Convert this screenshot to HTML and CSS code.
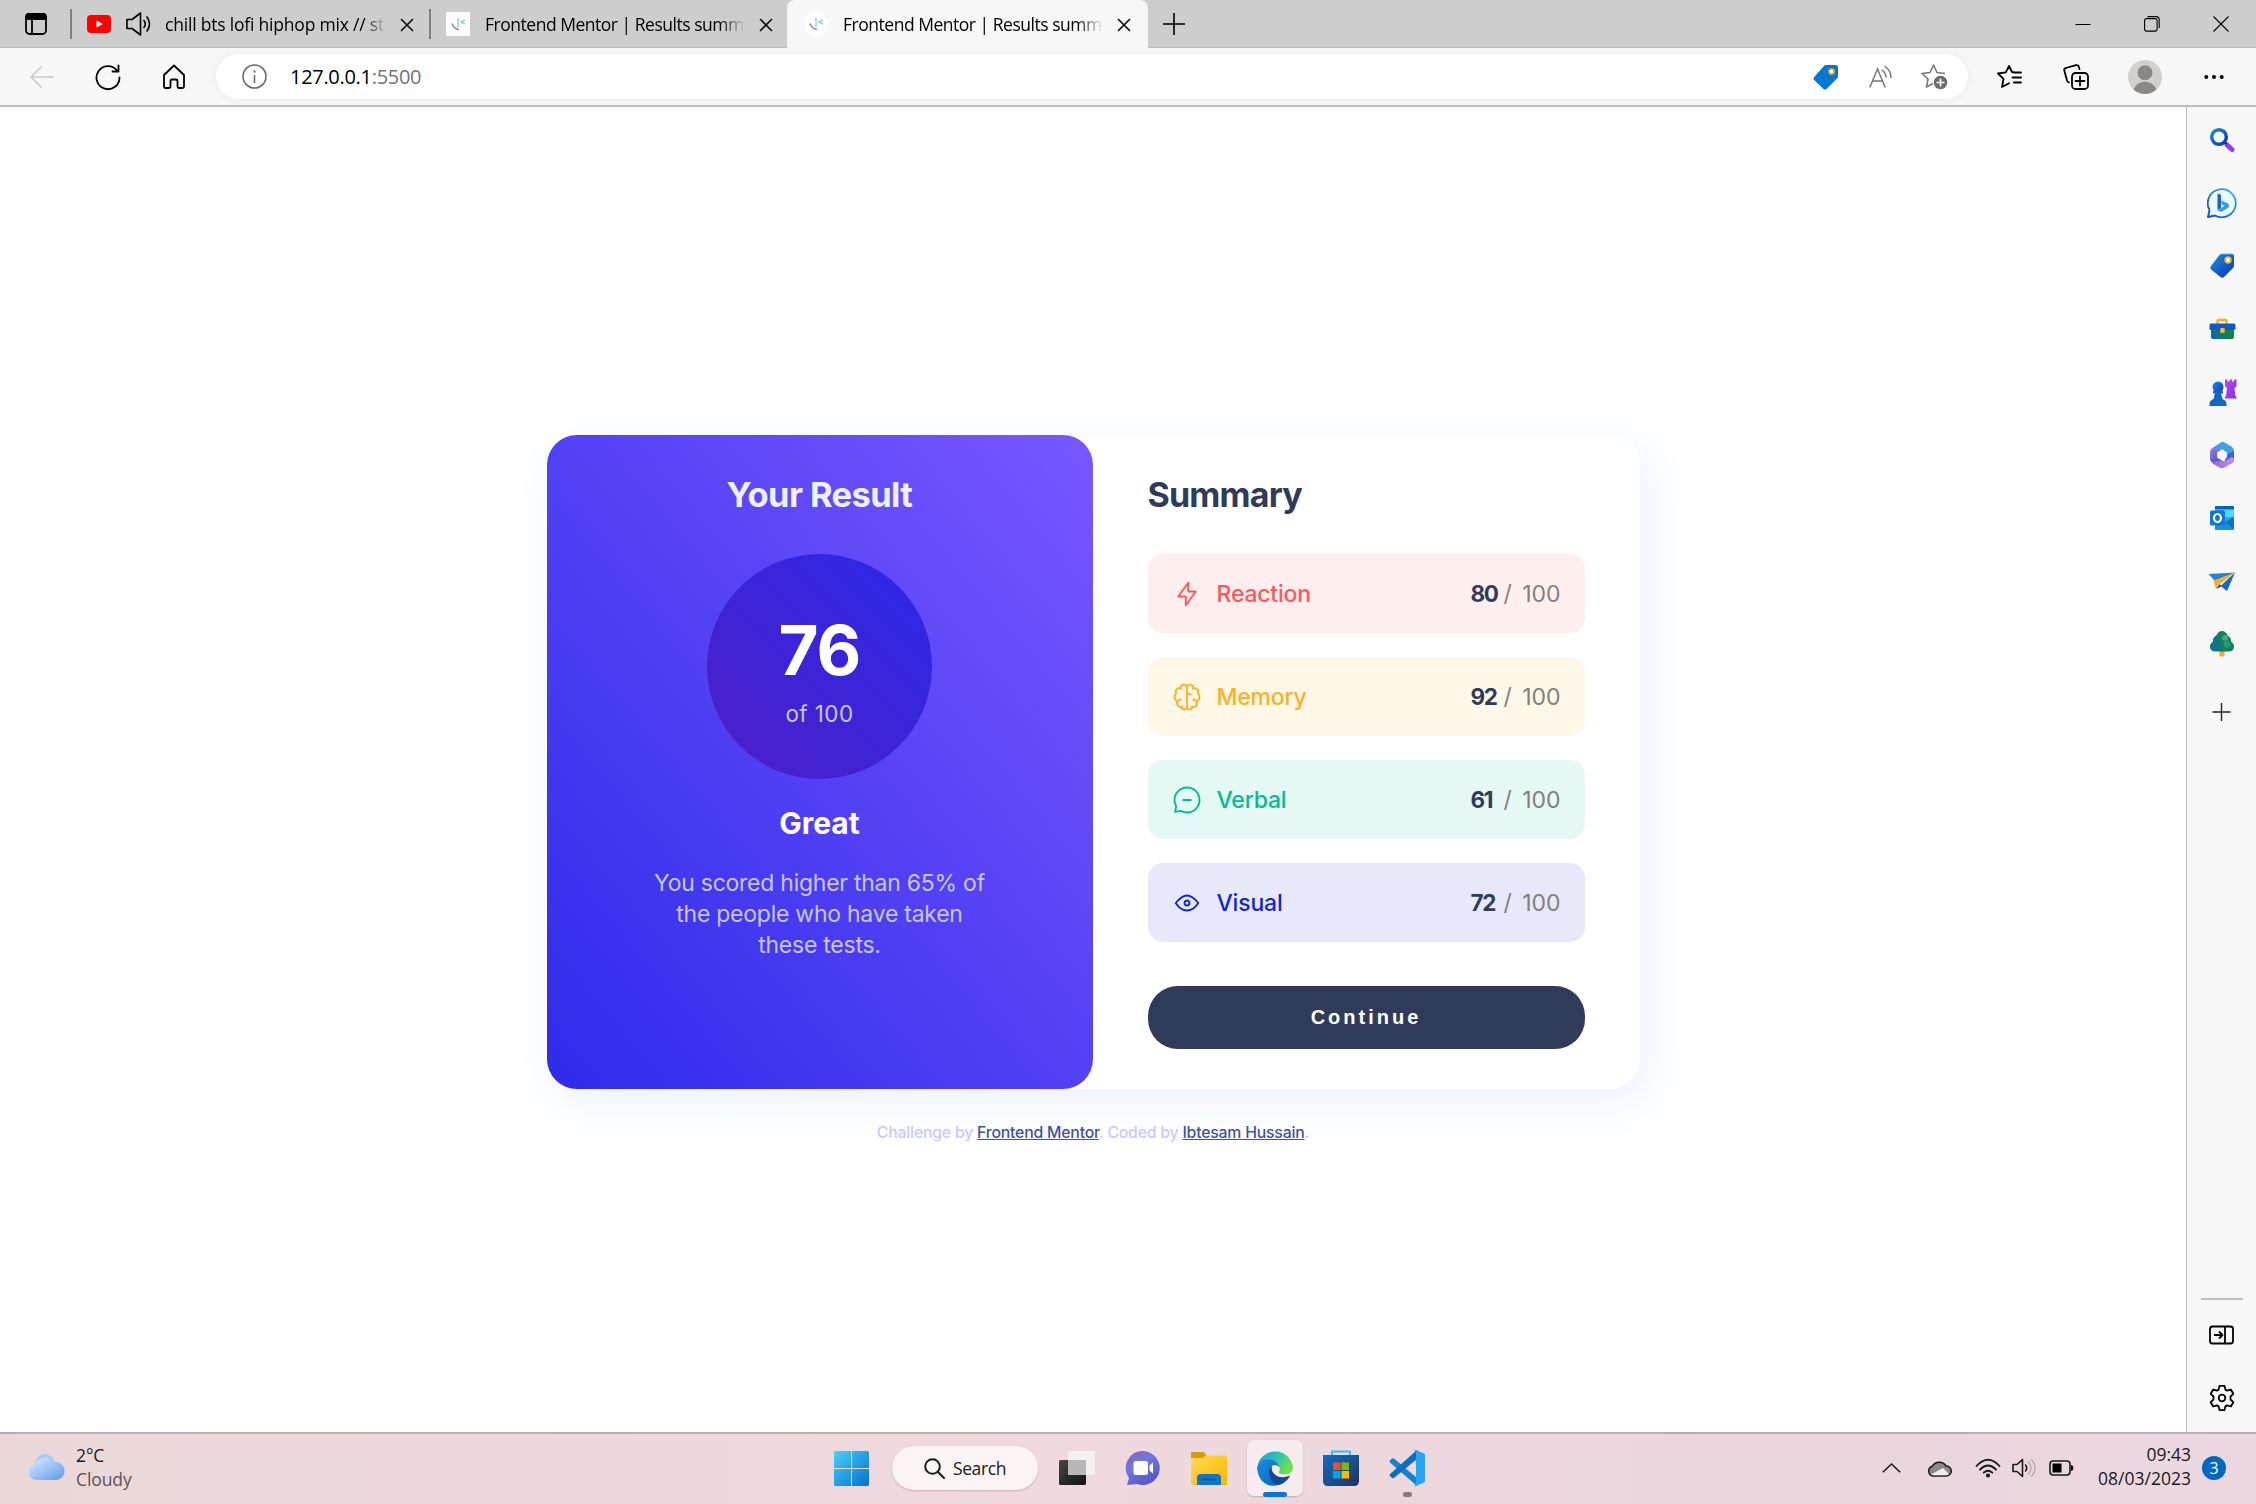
FILE: index.html
```html
<!DOCTYPE html>
<html lang="en">
<head>
<meta charset="utf-8">
<title>Frontend Mentor | Results summary component</title>
<link rel="stylesheet" href="styles.css">
</head>
<body>
<div class="tabstrip">
  <div class="tab-actions"><svg width="22" height="22" viewBox="0 0 22 22" fill="none" stroke="#000" stroke-width="1.8"><rect x="1" y="1" width="20" height="20" rx="3.5"/><path d="M1 6V4a3 3 0 0 1 3-3h14a3 3 0 0 1 3 3v2z" fill="#000"/><path d="M7 6v15"/></svg></div>
  <div class="tab tab-first">
    <svg width="24" height="18" viewBox="0 0 24 18"><rect width="24" height="18" rx="4" fill="#f00"/><path d="M9.5 5.5v7L16 9z" fill="#fff"/></svg>
    <svg class="speaker" width="25" height="24" viewBox="0 0 25 24" fill="none" stroke="#000" stroke-width="1.6" stroke-linejoin="round" stroke-linecap="round"><path d="M1 7.5h5L14.500 1v22L6 16.500H1zM18 8.500q2.400 3.500 0 7M21 5q5 7 0 14"/></svg>
    <span class="tab-title">chill bts lofi hiphop mix // st</span>
    <svg class="x" width="14" height="14" viewBox="0 0 14 14" stroke="#111" stroke-width="1.7"><path d="M1 1l12 12M13 1L1 13"/></svg>
  </div>
  <div class="tab tab-second">
    <svg class="fav" width="24" height="24" viewBox="0 0 24 24" fill="none" stroke-width="1.500"><path d="M0 0h24v24H0z" fill="#fff"/><path d="M12 6v9" stroke="#8fd0d6"/><path d="M19 8l-4 2 4 2" stroke="#8fd0d6"/><path d="M6 11.500q1.500 5 7 6" stroke="#8488c9"/></svg>
    <span class="tab-title">Frontend Mentor | Results summ</span>
    <svg class="x" width="14" height="14" viewBox="0 0 14 14" stroke="#111" stroke-width="1.7"><path d="M1 1l12 12M13 1L1 13"/></svg>
  </div>
  <div class="tab tab-active">
    <svg class="fav" width="24" height="24" viewBox="0 0 24 24" fill="none" stroke-width="1.500"><circle cx="12" cy="12" r="12" fill="#fff"/><path d="M12 6v9" stroke="#8fd0d6"/><path d="M19 8l-4 2 4 2" stroke="#8fd0d6"/><path d="M6 11.500q1.500 5 7 6" stroke="#8488c9"/></svg>
    <span class="tab-title">Frontend Mentor | Results summ</span>
    <svg class="x" width="14" height="14" viewBox="0 0 14 14" stroke="#111" stroke-width="1.7"><path d="M1 1l12 12M13 1L1 13"/></svg>
  </div>
  <svg class="new-tab" width="22" height="22" viewBox="0 0 22 22" stroke="#000" stroke-width="1.600"><path d="M11 0v22M0 11h22"/></svg>
  <div class="window-controls">
    <svg width="16" height="16" viewBox="0 0 16 16" stroke="#000"><path d="M.5 8.500h15"/></svg>
    <svg width="16" height="16" viewBox="0 0 16 16" fill="none" stroke="#000" stroke-width="1.100"><rect x=".6" y="2.600" width="12.500" height="12.500" rx="2"/><path d="M3.500.6H12a3.200 3.200 0 0 1 3.200 3.200V12"/></svg>
    <svg width="16" height="16" viewBox="0 0 16 16" stroke="#000" stroke-width="1.100"><path d="M.5.5l15 15M15.500.5l-15 15"/></svg>
  </div>
</div>

<div class="toolbar">
  <div class="nav">
    <svg width="24" height="24" viewBox="0 0 24 24" fill="none" stroke="#c9c9c9" stroke-width="1.500"><path d="M24 12H1M11.500 1.500L1 12l10.500 10.500"/></svg>
    <svg width="26" height="26" viewBox="0 0 26 26" fill="none" stroke="#000" stroke-width="1.800" stroke-linecap="round" stroke-linejoin="round"><path d="M24.500 13.500A11.500 11.500 0 1 1 22 6.500M23.500 1.500v6h-6"/></svg>
    <svg width="24" height="26" viewBox="0 0 24 26" fill="none" stroke="#000" stroke-width="1.800" stroke-linejoin="round"><path d="M2 11L12 1.500 22 11v11.500q0 1.500-1.500 1.500H17q-1.500 0-1.500-1.500V17q0-1.500-1.500-1.500h-4q-1.500 0-1.500 1.500v5.500Q8.500 24 7 24H3.500Q2 24 2 22.500z"/></svg>
  </div>
  <div class="address">
    <svg width="25" height="25" viewBox="0 0 25 25" fill="none" stroke="#6b6b6b" stroke-width="1.600"><circle cx="12.500" cy="12.500" r="11.500"/><path d="M12.500 11v8"/><path d="M12.500 6.500v2" stroke-width="2"/></svg>
    <span class="url">127.0.0.1<span class="port">:5500</span></span>
    <div class="address-icons">
      <svg width="26" height="26" viewBox="0 0 26 26"><path d="M13 1h9.500Q25 1 25 3.500V12q0 1.500-1 2.500L13.500 25q-1.500 1.200-3 0L1.200 16q-1.400-1.500 0-3L11 2q1-1 2-1z" fill="#0078d7"/><circle cx="18.500" cy="7.500" r="2.700" fill="#fff" stroke="#d9a513" stroke-width="1.600"/></svg>
      <svg width="24" height="24" viewBox="0 0 24 24" fill="none" stroke="#777" stroke-width="1.500" stroke-linecap="round"><path d="M1 22L8.500 4 16 22M3.500 16h10M13 5q4 3 4 7M16 1.500q6 4 6 11"/></svg>
      <svg width="27" height="27" viewBox="0 0 27 27" fill="none" stroke="#777" stroke-width="1.600" stroke-linejoin="round"><path d="M24 10.500l-8-1L12.500 2 9 9.500l-8 1 6 5.500-1.500 8L12 20.500"/><circle cx="19.500" cy="19.500" r="6.800" fill="#6b6b6b" stroke="none"/><path d="M19.500 15.500v8M15.500 19.500h8" stroke="#fff"/></svg>
    </div>
  </div>
  <div class="toolbar-icons">
    <svg width="25" height="25" viewBox="0 0 25 25" fill="none" stroke="#000" stroke-width="1.800" stroke-linejoin="round" stroke-linecap="round"><path d="M18 8.500l-3-.5L12 2 8.800 8.300 1 9.500l5.500 5.300L5 23l7-3.800M17 8.500h7M15.500 13.500H24M17 18.500h7"/></svg>
    <svg width="26" height="26" viewBox="0 0 26 26" fill="none" stroke="#000" stroke-width="1.800" stroke-linecap="round"><rect x="9" y="9" width="16" height="16" rx="3.500"/><path d="M17 12.500v9M12.500 17h9M6 18.500q-1.500-.5-2-2L1.300 6.500Q.8 4.500 3 4L13 1.200q2.500-.5 3 2l.5 2"/></svg>
    <svg width="34" height="34" viewBox="0 0 34 34"><circle cx="17" cy="17" r="17" fill="#d2d0ce"/><circle cx="17" cy="12.800" r="7.500" fill="#8a8886"/><path d="M5.500 29.500Q9 21.800 17 21.800t11.500 7.700A17 17 0 0 1 5.500 29.500z" fill="#8a8886"/></svg>
    <svg width="20" height="6" viewBox="0 0 20 6"><circle cx="2.300" cy="3" r="2"/><circle cx="10" cy="3" r="2"/><circle cx="17.700" cy="3" r="2"/></svg>
  </div>
</div>

<div class="workspace">
  <main class="page">
    <section class="card">
      <div class="result">
        <h1 class="result-title">Your Result</h1>
        <div class="score"><span class="score-value">76</span><span class="score-max">of 100</span></div>
        <h2 class="grade">Great</h2>
        <p class="comment">You scored higher than 65% of<br>the people who have taken<br>these tests.</p>
      </div>
      <div class="summary">
        <h1 class="summary-title">Summary</h1>
        <div class="stat reaction">
          <svg width="30" height="30" viewBox="0 0 20 20"><path d="M10.833 8.333V2.500l-6.666 9.167h5V17.500l6.666-9.167h-5Z"/></svg>
          <span class="label">Reaction</span><span class="points"><b>80</b><i>/</i><span>100</span></span>
        </div>
        <div class="stat memory">
          <svg width="30" height="30" viewBox="0 0 20 20"><path d="M5.833 11.667a2.500 2.500 0 1 0 .834 4.858"/><path d="M3.553 13.004a3.333 3.333 0 0 1-.728-5.530m.025-.067a2.083 2.083 0 0 1 2.983-2.824m.199.054A2.083 2.083 0 1 1 10 3.750v12.917a1.667 1.667 0 0 1-3.333 0M10 5.833a2.500 2.500 0 0 0 2.500 2.500m1.667 3.334a2.500 2.500 0 1 1-.834 4.858"/><path d="M16.447 13.004a3.334 3.334 0 0 0 .728-5.530m-.025-.067a2.083 2.083 0 0 0-2.983-2.824M10 3.750a2.085 2.085 0 0 1 2.538-2.033 2.084 2.084 0 0 1 1.430 2.920m-.635 12.028a1.667 1.667 0 0 1-3.333 0"/></svg>
          <span class="label">Memory</span><span class="points"><b>92</b><i>/</i><span>100</span></span>
        </div>
        <div class="stat verbal">
          <svg width="30" height="30" viewBox="0 0 20 20"><path d="M7.500 10h5M10 18.333A8.333 8.333 0 1 0 1.667 10c0 1.518.406 2.942 1.115 4.167l-.699 3.750 3.750-.699A8.295 8.295 0 0 0 10 18.333Z"/></svg>
          <span class="label">Verbal</span><span class="points"><b>61</b><i>/</i><span>100</span></span>
        </div>
        <div class="stat visual">
          <svg width="30" height="30" viewBox="0 0 20 20"><path d="M10 11.667a1.667 1.667 0 1 0 0-3.334 1.667 1.667 0 0 0 0 3.334Z"/><path d="M17.500 10c-1.574 2.492-4.402 5-7.500 5s-5.926-2.508-7.500-5C4.416 7.632 6.660 5 10 5s5.584 2.632 7.500 5Z"/></svg>
          <span class="label">Visual</span><span class="points"><b>72</b><i>/</i><span>100</span></span>
        </div>
        <button class="continue">Continue</button>
      </div>
    </section>
    <footer class="attribution">Challenge by <a href="#">Frontend Mentor</a>. Coded by <a href="#">Ibtesam Hussain</a>.</footer>
  </main>

  <aside class="sidebar">
    <svg class="side" viewBox="0 0 30 30"><defs><linearGradient id="ring" x2="1" y2="1"><stop stop-color="#1a8fd8"/><stop offset="1" stop-color="#0a35b8"/></linearGradient><linearGradient id="violet" y2="1"><stop stop-color="#b44df5"/><stop offset="1" stop-color="#8a2bd8"/></linearGradient></defs><path d="M20 20l5 4.500" stroke="#8a3ff0" stroke-width="5" stroke-linecap="round"/><path d="M17 16.500l2.500 2.500" stroke="#333" stroke-width="2.500"/><circle cx="12" cy="12" r="7.300" fill="#fff" stroke="url(#ring)" stroke-width="3.500"/></svg>
    <svg class="side" viewBox="0 0 30 30"><defs><linearGradient id="bing" x1="1" x2="0" y2="1"><stop stop-color="#35b5f5"/><stop offset="1" stop-color="#1744b5"/></linearGradient></defs><path d="M1 29l1.500-7A14 14 0 1 1 8 27.500z" fill="#eaf8ff" stroke="url(#bing)" stroke-width="1.800" stroke-linejoin="round"/><path d="M10.500 5.500l3.500 1.300V20l-3.500 2z" fill="#1b62d0"/><path d="M10.500 22l4.500-2.500 2.500-1.500-2.300-1.200-1.500-4.300 6.300 2.500q3 1.500 1.500 4.500L15 23.500q-2.500 1-4.500-1.500z" fill="#2e9df0"/></svg>
    <svg class="side" viewBox="0 0 30 30"><path d="M14.500 3H25q2 0 2 2v9.500q0 1.500-1 2.500l-9 9q-1.700 1.500-3.500 0L4 18.500q-1.600-1.700 0-3.500L12.500 4q.8-1 2-1z" fill="url(#ring)"/><path d="M14.500 3H25q2 0 2 2" stroke="#50b8f0" fill="none"/><circle cx="21" cy="9" r="2.800" fill="#fff" stroke="#f0b429" stroke-width="1.800"/></svg>
    <svg class="side" viewBox="0 0 30 30"><defs><linearGradient id="case"><stop stop-color="#0b68a0"/><stop offset="1" stop-color="#15883e"/></linearGradient></defs><path d="M10.500 10V7.500q0-1.500 1.500-1.500h6q1.500 0 1.500 1.500V10" fill="none" stroke="#eeb02b" stroke-width="2.400"/><path d="M4 14h23v9q0 2-2 2H6q-2 0-2-2z" fill="url(#case)"/><rect x="2.500" y="9.500" width="26" height="6.500" rx="1.500" fill="#1059c4"/><rect x="13.300" y="14" width="4.500" height="5" rx="1" fill="#f5b52c"/></svg>
    <svg class="side" viewBox="0 0 30 30"><path d="M18 2.500h2.500v2h2v-2h2.500v2h2v-2H29.500v7l-2 1.500.8 7.500 1.700 3H17.500l1.500-3 1-7.500-2-1.500z" fill="url(#violet)"/><circle cx="11" cy="10" r="5.500" fill="url(#ring)"/><path d="M6 14h10v2.500h-2l1.500 5.500q4 1.500 4 5v2h-17v-2q0-3.500 4-5L8 16.500H6z" fill="#1267c0"/></svg>
    <svg class="side" viewBox="0 0 30 30"><defs><linearGradient id="m3" x2=".4" y2="1"><stop stop-color="#b78be0"/><stop offset="1" stop-color="#4d52c4"/></linearGradient><linearGradient id="m4"><stop stop-color="#8d6bd0"/><stop offset="1" stop-color="#c88fe0"/></linearGradient></defs><path d="M16 2L6 7.500q-3 1.700-3 4.500v7q0 2.500 2.500 4L9 25l6-3-1-12z" fill="url(#m3)"/><path d="M15 1.800q1.500 0 3 .9l6.500 3.800q2.500 1.500 2.500 4.500v9l-7-4-1-4-5-3-5.500 2V6z" fill="#3fa0ea"/><path d="M27 11v8q0 3-2.500 4.500l-7-3L21 14z" fill="#3c63d6"/><path d="M9 21h9l7-4 2 2q0 3-2.500 4.500L17.500 27.600q-2.500 1-5 0L5.500 23.500z" fill="url(#m4)"/><path d="M15 9.500l4.800 2.700v5.600L15 20.500l-4.800-2.700v-5.600z" fill="#f7f7f7"/></svg>
    <svg class="side" viewBox="0 0 30 30"><rect x="8" y="3" width="19" height="24" rx="1.500" fill="#28a8ea"/><path d="M8 4q0-1 1-1h17q1 0 1 1v2H8z" fill="#0364b8"/><path d="M17 7h10v7H17z" fill="#50d9ff"/><path d="M27 14v12q0 1-1 1H9q-1 0-1-1V20h12z" fill="#1490df"/><path d="M18 19l9-5v12z" fill="#1470bd"/><rect x="3" y="7.500" width="15" height="15" rx="1.500" fill="#0f78d4"/><ellipse cx="10.500" cy="15" rx="3.500" ry="4" fill="none" stroke="#fff" stroke-width="2.200"/></svg>
    <svg class="side" viewBox="0 0 30 30"><path d="M1.500 8L28 6.500 8 15z" fill="#1b84dc"/><path d="M28 6.500L20 25l-6.500-5z" fill="#1267c8"/><path d="M28 6.500L6.500 14.500 9 23l4-5z" fill="#f2b02c"/><path d="M13 18l-3.500 5 4.500-2.500z" fill="#102a66"/></svg>
    <svg class="side" viewBox="0 0 30 30"><path d="M12.500 20h5v7q-2.500 1.500-5 0z" fill="#f3a72d"/><path d="M15 2q4 0 5.500 4.500 4 2 3.500 6 3.500 2.500 3 6-1 4-5 4H8q-4 0-5-4-.3-3.500 3-6-.5-4 3.500-6Q11 2 15 2z" fill="#12805f"/><path d="M10 6q-4 3-4 7-3 2-3 5 1 4 5 4h5z" fill="#0d7490"/><circle cx="18" cy="9" r="3" fill="#43a982"/><circle cx="20" cy="15.500" r="3.300" fill="#2a9c70"/></svg>
    <svg class="side plus" viewBox="0 0 30 30" stroke="#222" stroke-width="1.400"><path d="M14.500 6v18M5.500 15h18"/></svg>
    <div class="side-rule"></div>
    <svg class="side panel" viewBox="0 0 30 30" fill="none" stroke="#000" stroke-width="1.800" stroke-linejoin="round"><rect x="3" y="6.500" width="23" height="17" rx="2.500"/><path d="M18 6.500v17M7 15h8.500M12 11.500l3.500 3.500-3.500 3.500"/></svg>
    <svg class="side gear" viewBox="0 0 30 30" fill="none" stroke="#000" stroke-width="1.800" stroke-linejoin="round"><circle cx="15" cy="15" r="3.300"/><path d="M12.500 2.900h5l.9 3.700 1.700 1 3.700-1.100 2.500 4.300-2.800 2.700v3l2.800 2.700-2.500 4.300-3.700-1.100-1.700 1-.9 3.700h-5l-.9-3.700-1.700-1-3.700 1.100-2.500-4.300 2.800-2.700v-3L3.700 10.800l2.500-4.300 3.700 1.100 1.700-1z"/></svg>
  </aside>
</div>

<div class="taskbar">
  <div class="weather">
    <svg width="38" height="28" viewBox="0 0 38 28"><defs><linearGradient id="cl" y2="1"><stop stop-color="#dcebff"/><stop offset="1" stop-color="#5c9be8"/></linearGradient></defs><circle cx="17" cy="11" r="10" fill="#a6c9f5"/><path d="M8 27a8 8 0 0 1-1-15.500A11 11 0 0 1 26 9a9 9 0 1 1 3 18z" fill="url(#cl)"/></svg>
    <div class="weather-text"><span>2°C</span><span class="muted">Cloudy</span></div>
  </div>
  <div class="apps">
    <svg class="start" width="35" height="35" viewBox="0 0 35 35"><defs><linearGradient id="win" x2="1" y2="1" gradientUnits="userSpaceOnUse" gradientTransform="scale(35)"><stop stop-color="#4bd0fb"/><stop offset="1" stop-color="#0070d0"/></linearGradient></defs><path d="M1 0h16v17H0V1zM18 0h16l1 1v16H18zM0 18h17v17H1l-1-1zM18 18h17v16l-1 1H18z" fill="url(#win)"/></svg>
    <div class="search"><svg width="21" height="21" viewBox="0 0 21 21" fill="none" stroke="#1a1a1a" stroke-width="2" stroke-linecap="round"><circle cx="8.500" cy="8.500" r="7.300"/><path d="M14 14l6 6"/></svg><span>Search</span></div>
    <div class="app"><svg width="36" height="36" viewBox="0 0 36 36"><defs><linearGradient id="tv" y2="1"><stop stop-color="#454545"/><stop offset="1" stop-color="#151515"/></linearGradient></defs><rect x="0" y="10" width="27" height="25" rx="1.500" fill="url(#tv)"/><rect x="9" y="1" width="27" height="24" rx="1.500" fill="#f3f1f1"/><path d="M9 10h18v15H10q-1 0-1-1z" fill="#b9b7b7"/></svg></div>
    <div class="app"><svg width="36" height="36" viewBox="0 0 36 36"><defs><linearGradient id="chat" x2=".6" y2="1"><stop stop-color="#8e63b8"/><stop offset=".45" stop-color="#6e78dc"/><stop offset="1" stop-color="#5558c8"/></linearGradient></defs><path d="M18 1a17 17 0 1 1-6 33L2 35l2-7A17 17 0 0 1 18 1z" fill="url(#chat)"/><rect x="8.500" y="11" width="14.500" height="14" rx="2.500" fill="#fff"/><path d="M24.500 15.500l3.500-3v11l-3.500-3z" fill="#fff"/></svg></div>
    <div class="app"><svg width="36" height="34" viewBox="0 0 36 34"><defs><linearGradient id="fold" x2="1" y2="1"><stop stop-color="#ffdb58"/><stop offset="1" stop-color="#f9b500"/></linearGradient></defs><path d="M0 2q0-1 1-1h11q1.500 0 2.500 2l1.500 2v4H0z" fill="#dc9b0c"/><path d="M0 7h11q2 0 3.500-2.500H35q1 0 1 1V33q0 1-1 1H1q-1 0-1-1z" fill="url(#fold)"/><path d="M6 34V27q0-4 4-4h16q4 0 4 4v7z" fill="#1174c7"/><path d="M11 28.500h14" stroke="#0a4e94" stroke-width="1.500"/></svg></div>
    <div class="app active"><svg width="36" height="36" viewBox="0 0 36 36"><defs><linearGradient id="ea" x2="1" y2=".4"><stop stop-color="#1ba3d8"/><stop offset=".55" stop-color="#2fc1b5"/><stop offset="1" stop-color="#6fe04a"/></linearGradient><linearGradient id="eb" y2="1"><stop stop-color="#1690dc"/><stop offset="1" stop-color="#0a64c2"/></linearGradient></defs><path d="M1 14A18 18 0 0 1 36 17q0 7-7.500 7.500-6 .2-7-2.500 2-2 1-5Q20 11 11 11 4 11 1 14z" fill="url(#ea)"/><path d="M0 18Q1 9 11 9.500q9 0 11.500 8-2-3-5.500-2.500-5 1.500-5 8 1 9 10 11.500-3 1.500-6 1.300Q2 35 0 18z" fill="url(#eb)"/><path d="M15 15.500q-4 3-3 9 2 9 10 10.500 6-1.500 10.500-8 .5-1.500-1-1-8 3-13-1-5-4-3.500-9.500z" fill="#114a94"/></svg></div>
    <div class="app"><svg width="36" height="36" viewBox="0 0 36 36"><defs><linearGradient id="st" y2="1"><stop stop-color="#0f6cc4"/><stop offset="1" stop-color="#21355f"/></linearGradient></defs><path d="M9 6V1.500h18V6" fill="none" stroke="#32bdf3" stroke-width="2"/><path d="M0 5h36v26q0 5-5 5H5q-5 0-5-5z" fill="url(#st)"/><path d="M10 12.500h7.500V20H10z" fill="#f25022"/><path d="M18.500 12.500H26V20h-7.500z" fill="#7fba00"/><path d="M10 21h7.500v7.500H10z" fill="#00a4ef"/><path d="M18.500 21H26v7.500h-7.500z" fill="#ffb900"/></svg></div>
    <div class="app running"><svg width="36" height="36" viewBox="0 0 36 36"><path d="M1 12.500q-1-1 0-2l2-2q1-.7 2 0L28 28v8z" fill="#1483cf"/><path d="M1 24q-1 1 0 2l2 2q1 .7 2 0L28 9V0z" fill="#0e71b8"/><path d="M27 0l8 3.500q1 .5 1 1.500v26q0 1-1 1.500L27 36q-1 .3-2-1 2 .5 2-1V2q0-1.500-2-1 1-1.300 2-1z" fill="#29a4f2"/></svg></div>
  </div>
  <div class="tray">
    <svg class="chev" width="19" height="10" viewBox="0 0 19 10" fill="none" stroke="#1a1a1a" stroke-width="1.500"><path d="M.8 9.200L9.500 1l8.700 8.200"/></svg>
    <svg width="25" height="17" viewBox="0 0 25 17"><path d="M6 16a5 5 0 0 1-.8-9.700A8 8 0 0 1 19 6a5 5 0 0 1 .5 10z" fill="#8c8788" stroke="#1a1a1a" stroke-width="1.500"/><path d="M4 14.500L16 8l6 6q-1 1.300-3 1.300H6.500z" fill="#f1eded"/></svg>
    <svg width="26" height="20" viewBox="0 0 26 20" fill="none" stroke="#1a1a1a" stroke-width="1.800" stroke-linecap="round"><path d="M1.500 8Q13-4.500 24.500 8M5 11.500q8-8 16 0M8.700 14.700q4.300-4 8.600 0"/><circle cx="13" cy="17.500" r="1.200" fill="#1a1a1a"/></svg>
    <svg width="25" height="20" viewBox="0 0 25 20" fill="none" stroke="#1a1a1a" stroke-width="1.600" stroke-linejoin="round" stroke-linecap="round"><path d="M1 6.500h4L10.500 1.500v17L5 13.500H1zM13.500 7q2.500 3 0 6"/><path d="M16.500 4q5 6 0 12M19.500 1.500q7 8.500 0 17" stroke="#bdaeb3"/></svg>
    <svg width="25" height="16" viewBox="0 0 25 16"><rect x="1" y="1" width="20" height="14" rx="3.200" fill="none" stroke="#1a1a1a" stroke-width="1.600"/><path d="M3.500 3.500h9v9h-9z"/><path d="M22 5q2.500.5 2.500 3T22 11z"/></svg>
    <div class="clock"><span>09:43</span><span>08/03/2023</span></div>
    <span class="badge">3</span>
  </div>
</div>
</body>
</html>
```
FILE: styles.css
```css
* { box-sizing: border-box; }
body {
  margin: 0;
  width: 2256px;
  height: 1504px;
  overflow: hidden;
  display: flex;
  flex-direction: column;
  background: #fff;
  font-family: "Open Sans", "Noto Sans", sans-serif;
  font-size: 18px;
  color: #000;
}
svg { display: block; flex: none; }

/* Tab strip */
.tabstrip {
  height: 48px;
  flex: none;
  display: flex;
  align-items: center;
  background: #cdcdcd;
  box-shadow: inset 0 -1px 0 #bcbcbc;
}
.tab-actions { width: 70px; padding-left: 25px; }
.tab { display: flex; align-items: center; height: 48px; }
.tab-first { width: 359px; padding-left: 17px; }
.tab-first, .tab-second {
  background: linear-gradient(#808080, #808080) left center / 2px 30px no-repeat;
}
.tab-second { width: 358px; padding-left: 17px; }
.tab-active {
  width: 361px;
  padding-left: 17px;
  background: #f7f7f7;
  border-radius: 8px 8px 0 0;
}
.speaker { margin-left: 15px; }
.tab-title {
  flex: none;
  width: 260px;
  margin-left: 15px;
  white-space: nowrap;
  letter-spacing: -0.48px;
  font-size: 17.5px;
  line-height: 26px;
  -webkit-mask-image: linear-gradient(to right, #000 90%, transparent);
  mask-image: linear-gradient(to right, #000 90%, transparent);
}
.tab-first .tab-title { width: 221px; margin-left: 14px; letter-spacing: -0.2px; }
.tab .x { margin-left: 14px; margin-top: 1px; }
.new-tab { margin-left: 15px; }
.window-controls { display: flex; gap: 53px; margin-left: auto; margin-right: 27px; }

/* Toolbar */
.toolbar {
  height: 59px;
  flex: none;
  display: flex;
  align-items: center;
  background: #f7f7f7;
  border-bottom: 2px solid #bdbdbd;
}
.nav { width: 216px; display: flex; align-items: center; gap: 41px; padding-left: 30px; }
.address {
  width: 1752px;
  height: 45px;
  display: flex;
  align-items: center;
  padding-left: 26px;
  border-radius: 23px;
  background: #fff;
  box-shadow: 0 0 8px rgba(0, 0, 0, 0.06);
}
.url { margin-left: 23px; font-size: 20px; letter-spacing: -0.3px; }
.port { color: #737373; }
.address-icons { display: flex; align-items: center; gap: 30px; margin-left: auto; margin-right: 20px; }
.address-icons svg:nth-child(2) { margin-right: -2px; }
.toolbar-icons { display: flex; align-items: center; margin-left: 29px; }
.toolbar-icons svg:nth-child(2) { margin-left: 41px; }
.toolbar-icons svg:nth-child(3) { margin-left: 39px; }
.toolbar-icons svg:nth-child(4) { margin-left: 42px; }

/* Web page */
.workspace { flex: 1; display: flex; min-height: 0; }
.page {
  width: 2186px;
  padding-top: 328px;
  display: flex;
  flex-direction: column;
  align-items: center;
  font-family: Inter, "Liberation Sans", sans-serif;
}
.card {
  width: 1093px;
  height: 654px;
  display: flex;
  border-radius: 30px;
  background: #fff;
  box-shadow: 9px 13px 40px rgba(70, 125, 255, 0.11);
}
.result {
  width: 546px;
  display: flex;
  flex-direction: column;
  align-items: center;
  border-radius: 30px;
  background: linear-gradient(to bottom left, #7857ff, #2e2be9);
  color: #fff;
}
h1, h2, p { margin: 0; }
.result-title, .summary-title { font-size: 34.500px; font-weight: 650; line-height: 44px; }
.result-title { margin-top: 38px; color: #ebf1ff; letter-spacing: -0.6px; }
.score {
  width: 225px;
  height: 225px;
  margin-top: 37px;
  display: flex;
  flex-direction: column;
  align-items: center;
  border-radius: 50%;
  background: linear-gradient(to top right, #4d1fc6, #2b28e8);
}
.score-value { margin-top: 54px; font-size: 69px; font-weight: 700; line-height: 84px; letter-spacing: -1px; }
.score-max { margin-top: 7px; font-size: 22.500px; line-height: 30px; color: #c8c7ff; letter-spacing: 0.4px; }
.grade { margin-top: 25px; font-size: 30px; font-weight: 650; line-height: 38px; }
.comment { margin-top: 26px; font-size: 23px; line-height: 31px; letter-spacing: -0.25px; text-align: center; color: #c8c7ff; }
.summary { flex: 1; padding: 0 55px; display: flex; flex-direction: column; }
.summary-title { margin: 38px 0 37px; color: #303b5a; font-size: 34px; letter-spacing: -0.8px; }
.stat {
  height: 79px;
  flex: none;
  margin-bottom: 24px;
  padding: 0 24px;
  display: flex;
  align-items: center;
  border-radius: 15px;
  font-size: 23px;
}
.stat svg {
  fill: none;
  stroke: currentColor;
  stroke-width: 1.25;
  stroke-linecap: round;
  stroke-linejoin: round;
}
.label { margin-left: 15px; font-weight: 500; letter-spacing: -0.2px; }
.points { margin-left: auto; width: 90px; display: flex; align-items: baseline; color: #808080; }
.points b { width: 33px; color: #303b5a; font-size: 22.500px; font-weight: 700; letter-spacing: -1.400px; }
.points i { flex: 1; font-style: normal; }
.reaction { color: #ff5757; background: #ffeeee; }
.memory { color: #ffb01f; background: #fff8e8; }
.verbal { color: #00bd91; background: #e5f8f3; }
.visual { color: #1125d4; background: #e7e8fa; }
.continue {
  height: 63px;
  margin-top: 20px;
  border: 0;
  border-radius: 30px;
  background: #303b5a;
  color: #fff;
  font: bold 20px "Liberation Sans", sans-serif;
  letter-spacing: 3px;
}
.attribution { margin-top: 33px; font-size: 15.800px; font-weight: 500; line-height: 22px; letter-spacing: -0.2px; color: #c8c7ff; }
.attribution a { color: #3e52a3; }

/* Browser sidebar */
.sidebar {
  width: 70px;
  display: flex;
  flex-direction: column;
  align-items: center;
  gap: 33px;
  padding-top: 18px;
  background: #f7f7f7;
  border-left: 1px solid #b9b9b9;
}
.side { width: 30px; height: 30px; }
.plus { margin-top: 5px; }
.side-rule { width: 42px; height: 2px; flex: none; margin-top: auto; background: #bdbdbd; }
.panel { margin-top: -13px; }
.gear { margin-bottom: 19px; }

/* Taskbar */
.taskbar {
  height: 72px;
  flex: none;
  display: grid;
  grid-template-columns: 834px 1fr auto;
  padding-bottom: 2px;
  border-top: 2px solid #b8adb2;
  background: linear-gradient(90deg, #ead8d9, #efd9de 45%, #e9d6dd 80%, #ecd8e0);
  font-size: 17.500px;
  color: #1a1a1a;
}
.weather { display: flex; align-items: center; gap: 10px; padding: 0 0 3px 28px; }
.weather-text { display: flex; flex-direction: column; line-height: 24px; letter-spacing: -0.1px; }
.muted { color: #5c5557; }
.apps { display: flex; align-items: center; }
.search {
  width: 146px;
  height: 44px;
  margin-left: 23px;
  margin-right: 11px;
  display: flex;
  align-items: center;
  gap: 8px;
  padding-left: 32px;
  border-radius: 22px;
  background: #faf4f5;
  box-shadow: 0 1px 2px rgba(90, 50, 60, 0.25);
  letter-spacing: -0.4px;
}
.app {
  position: relative;
  width: 56px;
  height: 56px;
  margin-right: 10px;
  display: flex;
  align-items: center;
  justify-content: center;
  border-radius: 7px;
}
.active { background: #f6ebef; box-shadow: 0 1px 2px rgba(90, 50, 60, 0.25); }
.active::after, .running::after {
  content: "";
  position: absolute;
  bottom: -1px;
  left: 16px;
  width: 24px;
  height: 5px;
  border-radius: 3px;
  background: #0b76d8;
}
.running::after { left: 24px; width: 9px; background: #877b80; }
.tray { display: flex; align-items: center; padding-right: 30px; }
.tray > svg { margin-right: 12px; }
.tray > svg:nth-child(1) { margin-right: 26px; }
.tray > svg:nth-child(2) { margin-right: 23px; }
.tray > svg:nth-child(3) { margin-right: 11px; }
.clock { width: 105px; padding-bottom: 4px; display: flex; flex-direction: column; align-items: flex-end; line-height: 24px; white-space: nowrap; }
.badge {
  width: 24px;
  height: 24px;
  margin-left: 11px;
  border-radius: 50%;
  background: #0067c0;
  color: #fff;
  font-size: 16px;
  line-height: 24px;
  text-align: center;
}
```
